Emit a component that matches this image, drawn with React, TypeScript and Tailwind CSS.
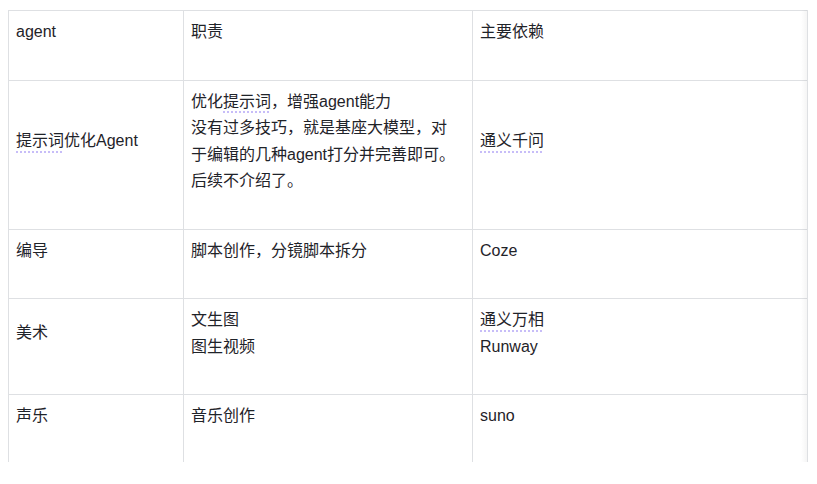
import type { ReactNode } from "react";

const font = {
  fontFamily: '"Liberation Sans", "Noto Sans CJK SC", sans-serif',
};

function Mark({ children }: { children: ReactNode }) {
  return (
    <span className="underline decoration-dotted decoration-2 decoration-[#c7bdf8] underline-offset-[5px]">
      {children}
    </span>
  );
}

interface Row {
  role: ReactNode;
  duty: ReactNode[];
  deps: ReactNode[];
}

const rows: Row[] = [
  {
    role: (
      <>
        <Mark>提示词</Mark>优化Agent
      </>
    ),
    duty: [
      <>
        优化<Mark>提示词</Mark>，增强agent能力
      </>,
      "没有过多技巧，就是基座大模型，对",
      "于编辑的几种agent打分并完善即可。",
      "后续不介绍了。",
    ],
    deps: [<Mark>通义千问</Mark>],
  },
  { role: "编导", duty: ["脚本创作，分镜脚本拆分"], deps: ["Coze"] },
  { role: "美术", duty: ["文生图", "图生视频"], deps: [<Mark>通义万相</Mark>, "Runway"] },
  { role: "声乐", duty: ["音乐创作"], deps: ["suno"] },
];

const cell =
  "border border-[#dee0e3] pl-[7px] pr-2 pt-[8px] pb-[34px] align-middle text-left font-normal";

export default function App() {
  return (
    <div className="min-h-[484px] bg-white pl-[8px] pt-[10px]" style={font}>
      <div className="relative h-[452px] w-[800px] overflow-hidden">
        <table className="w-[799px] table-fixed border-collapse text-[16px] leading-[26.5px] text-[#1f2329]">
          <colgroup>
            <col className="w-[175px]" />
            <col className="w-[289px]" />
            <col className="w-[335px]" />
          </colgroup>
          <thead>
            <tr>
              <th className={cell}>agent</th>
              <th className={cell}>职责</th>
              <th className={cell}>主要依赖</th>
            </tr>
          </thead>
          <tbody>
            {rows.map((row, i) => (
              <tr key={i}>
                <td className={cell}>{row.role}</td>
                <td className={cell}>
                  {row.duty.map((line, j) => (
                    <div key={j} className="whitespace-nowrap">
                      {line}
                    </div>
                  ))}
                </td>
                <td className={cell}>
                  {row.deps.map((line, j) => (
                    <div key={j} className="whitespace-nowrap">
                      {line}
                    </div>
                  ))}
                </td>
              </tr>
            ))}
          </tbody>
        </table>
        {/* scroll shadow on the right edge */}
        <div className="pointer-events-none absolute left-[793px] top-0 h-full w-[6px] bg-gradient-to-r from-transparent to-black/[0.04]" />
      </div>
    </div>
  );
}
